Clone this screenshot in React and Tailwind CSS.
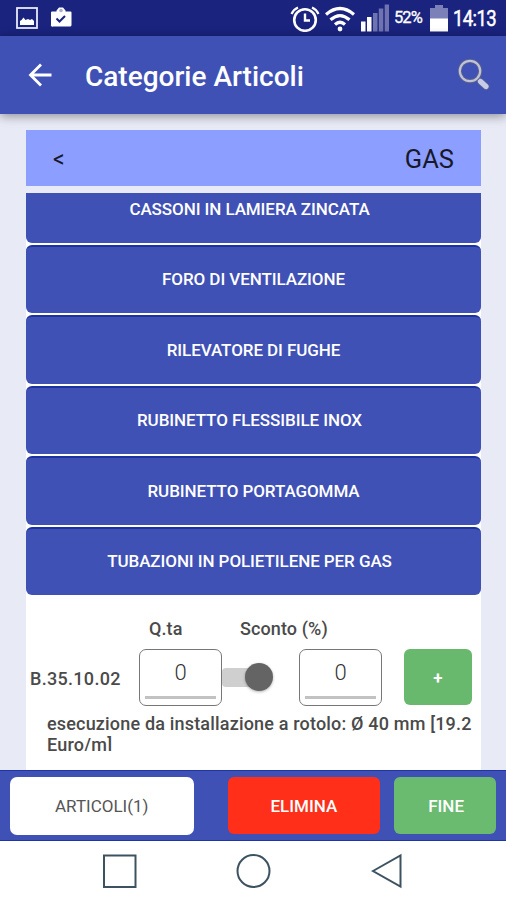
import React, { useState } from 'react';

const categories = [
  { name: 'CASSONI IN LAMIERA ZINCATA', trailing: true },
  { name: 'FORO DI VENTILAZIONE' },
  { name: 'RILEVATORE DI FUGHE' },
  { name: 'RUBINETTO FLESSIBILE INOX', trailing: true },
  { name: 'RUBINETTO PORTAGOMMA' },
  { name: 'TUBAZIONI IN POLIETILENE PER GAS', trailing: true },
];

const StatusBar = () => (
  <div className="flex h-9 items-center justify-between bg-[#1a237e] pr-[9px] pl-4 text-white">
    <div className="flex items-center gap-3">
      {/* Screenshot notification */}
      <svg className="h-[22px] w-[22px]" viewBox="0 0 22 22" fill="none">
        <rect x="1" y="1" width="20" height="20" stroke="#e8e9f5" strokeWidth="1.800" />
        <path d="M4 18v-4l1.500-1 2-2.500 2 2.500 2.500-1 2 1 2-1 2 2v4z" fill="#fff" />
      </svg>
      {/* Clipboard with check */}
      <svg className="h-[22px] w-[22px]" viewBox="0 0 22 22" fill="none">
        <path d="M6.500 4.500V3.500L9 0.500h4l2.500 3v1h5a1 1 0 0 1 1 1v12.500a1.500 1.500 0 0 1-1.500 1.500h-17A1.500 1.500 0 0 1 1 17.500V5.500a1 1 0 0 1 1-1z" fill="#fff" />
        <circle cx="11" cy="3.500" r="1.800" fill="#a9acd4" />
        <path d="M6.500 11.500l3 3 5.500-5.500" stroke="#1a237e" strokeWidth="2" />
      </svg>
    </div>
    <div className="flex items-center">
      <svg className="h-7 w-[30px]" viewBox="0 0 30 28" fill="none" stroke="#fff">
        <circle cx="15" cy="16" r="10.800" strokeWidth="2.600" />
        <path d="M15 9.500v7h5" strokeWidth="2.400" />
        <path d="M1.500 10q2-4.500 6.500-6.500M28.500 10q-2-4.500-6.500-6.500" strokeWidth="2.200" />
      </svg>
      <svg className="ml-[5px] h-7 w-[30px]" viewBox="0 0 30 28" fill="none" stroke="#fff" strokeWidth="3.200">
        <path d="M1 10.500q14-12 28 0M5.500 15.800q9.500-8.400 19 0M10 20.500q5-4.500 10 0" />
        <circle cx="15" cy="25" r="2.400" fill="#fff" stroke="none" />
      </svg>
      <svg className="ml-[6px] h-7 w-[28px]" viewBox="0 0 28 28">
        <path d="M0 17.500h4.500v10H0zM6 13h4.500v14.500H6z" fill="#fff" />
        <path d="M12 9h4.500v18.500H12zM17.800 4.500h4.500v23h-4.500zM23.700 0.500h4.300v27h-4.300z" fill="#6f74b0" />
      </svg>
      <span className="ml-[5px] w-[31px] text-[16.500px] leading-none tracking-[-0.900px] whitespace-nowrap [-webkit-text-stroke:0.300px_white]">52%</span>
      <svg className="ml-[5px] h-7 w-[18px]" viewBox="0 0 18 28">
        <path d="M5 1h8v3h5v11H0V4h5z" fill="#7c80b8" />
        <path d="M0 14.500h18v13H0z" fill="#fff" />
      </svg>
      <span className="ml-[5px] w-[44px] pt-px leading-none whitespace-nowrap">
        <span className="inline-block origin-left scale-x-[0.860] text-[21.500px] tracking-[-0.700px] [-webkit-text-stroke:0.500px_white]">14:13</span>
      </span>
    </div>
  </div>
);

const AppBar = () => (
  <header className="relative z-10 flex h-[78px] items-center bg-[#3f51b5] pr-[16px] pl-7 text-white shadow-[0_2px_10px_rgba(0,0,0,0.4)]">
    <button aria-label="Indietro">
      <svg className="h-6 w-6" viewBox="0 0 24 24" fill="none" stroke="#fff" strokeWidth="2.800">
        <path d="M23.500 12H2.500M13 1.500L2.500 12 13 22.500" />
      </svg>
    </button>
    <h1 className="ml-[33px] flex-1 pt-[3px] text-[28px] font-medium whitespace-nowrap">Categorie Articoli</h1>
    <button aria-label="Cerca">
      <svg className="h-8 w-8" viewBox="0 0 32 32" fill="none">
        <path d="M22.500 22.500l5.500 5" stroke="#59608f" strokeWidth="7" strokeLinecap="round" />
        <path d="M18 18l4 4" stroke="#c6cbea" strokeWidth="2.800" />
        <path d="M22.500 22.500l5.500 5" stroke="#c6cbea" strokeWidth="5.200" strokeLinecap="round" />
        <circle cx="12" cy="12" r="10.200" stroke="#59608f" strokeWidth="4.200" />
        <circle cx="12" cy="12" r="10.200" stroke="#c0c3d6" strokeWidth="2.200" />
      </svg>
    </button>
  </header>
);

const NumberBox = ({ value }) => (
  <div className="flex h-[57px] w-[83px] flex-col items-center rounded-[7px] border-[1.500px] border-[#777] px-[5px]">
    <span className="mt-[7px] text-[22px] leading-[31px] font-light text-[#333]">{value}</span>
    <div className="mt-[8px] h-[3px] w-full bg-[#c2c2c2]" />
  </div>
);

const ArticleRow = () => {
  const [checked, setChecked] = useState(false);

  return (
    <div className="pt-[22px] text-[#4a4a4a]">
      <div className="flex text-[18px] leading-6 font-medium tracking-[0.100px]">
        <span className="ml-[123px] w-[91px]">Q.ta</span>
        <span className="whitespace-nowrap">Sconto (%)</span>
      </div>
      <div className="mt-2 flex items-center">
        <span className="ml-1 w-[109px] pt-[2px] text-[18px] font-medium tracking-[0.300px] whitespace-nowrap">B.35.10.02</span>
        <NumberBox value={0} />
        <button
          role="switch"
          aria-checked={checked}
          onClick={() => setChecked(!checked)}
          className="flex h-[19px] w-[51px] items-center justify-end rounded-l-[4px] bg-linear-to-r from-[#cfcfcf] from-60% to-transparent to-60%"
        >
          <span className="h-7 w-7 rounded-full bg-[#646464] shadow-[0_1px_3px_rgba(0,0,0,0.3)]" />
        </button>
        <div className="ml-[26px]">
          <NumberBox value={0} />
        </div>
        <button className="ml-[22px] h-[56px] w-[68px] rounded-[6px] bg-[#68b86e] pt-[2px] text-[17px] font-bold text-white">+</button>
      </div>
      {/* description is limited to a fixed height */}
      <p className="mt-[7px] ml-[21px] h-[38px] overflow-hidden text-[18px] leading-[21px] font-medium tracking-[0.180px] whitespace-nowrap">
        esecuzione da installazione a rotolo: Ø 40 mm [19.2
        <br />
        Euro/m]
      </p>
    </div>
  );
};

const BottomBar = () => (
  <div className="flex h-[71px] items-center border-y border-[#1f35a5] bg-[#3f51b5] px-[10px] text-[17px]">
    <button className="h-[58px] w-[184px] rounded-[7px] bg-white pt-[2px] text-[#555]">ARTICOLI(1)</button>
    <button className="ml-[34px] h-[57px] w-[153px] rounded-[6px] bg-[#ff2f1a] pt-[2px] font-medium text-white">ELIMINA</button>
    <button className="ml-[14px] h-[57px] w-[102px] rounded-[6px] bg-[#6aba70] pt-[2px] pl-[2px] font-medium text-white">FINE</button>
  </div>
);

const NavBar = () => (
  <nav className="flex h-[59px] items-center bg-white pl-[102px]">
    <svg className="h-9 w-9" viewBox="0 0 36 36" fill="none" stroke="#3d5260" strokeWidth="2">
      <rect x="2" y="2.500" width="31.500" height="31.500" />
    </svg>
    <svg className="ml-[98px] h-9 w-9" viewBox="0 0 36 36" fill="none" stroke="#3d5260" strokeWidth="2">
      <circle cx="17.500" cy="18" r="16" />
    </svg>
    <svg className="ml-[98px] h-9 w-9" viewBox="0 0 36 36" fill="none" stroke="#3d5260" strokeWidth="2">
      <path d="M3 18L30.500 2.500v31z" />
    </svg>
  </nav>
);

export default function App() {
  return (
    <div className="flex h-[900px] w-[506px] flex-col overflow-hidden bg-[#e8eaf6] font-['Roboto',sans-serif]">
      <StatusBar />
      <AppBar />

      <main className="flex min-h-0 flex-1 flex-col pt-4 pr-[25px] pl-[26px]">
        <div className="flex h-14 shrink-0 items-center justify-between bg-[#8c9eff] px-[27px] pt-[3px] text-[#17192b]">
          <button className="text-[23px] leading-none">&lt;</button>
          <span className="text-[25.500px]">GAS</span>
        </div>

        <div className="mt-[7px] min-h-0 flex-1 overflow-hidden bg-white">
          <div className="-mt-[18.400px] flex flex-col gap-[2px]">
            {categories.map(({ name, trailing }) => (
              <button
                key={name}
                className={`h-[68.400px] rounded-[6px] border-t-2 border-[#1c329f] bg-[#3f51b5] text-[17px] font-medium tracking-[-0.080px] text-white ${trailing ? 'pr-2' : ''}`}
              >
                {name}
              </button>
            ))}
          </div>
          <ArticleRow />
        </div>
      </main>

      <BottomBar />
      <NavBar />
    </div>
  );
}
